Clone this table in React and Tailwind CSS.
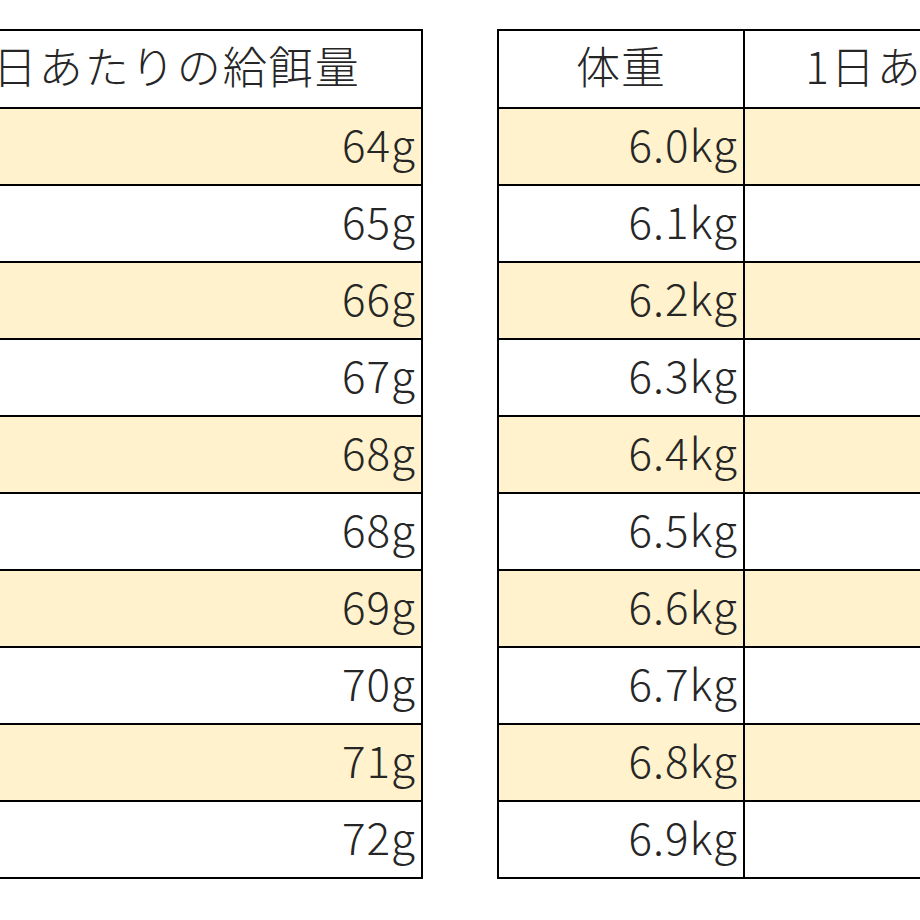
const leftRows = [
  ["5.0kg", "64g"],
  ["5.1kg", "65g"],
  ["5.2kg", "66g"],
  ["5.3kg", "67g"],
  ["5.4kg", "68g"],
  ["5.5kg", "68g"],
  ["5.6kg", "69g"],
  ["5.7kg", "70g"],
  ["5.8kg", "71g"],
  ["5.9kg", "72g"],
];

const rightRows = [
  ["6.0kg", "73g"],
  ["6.1kg", "74g"],
  ["6.2kg", "75g"],
  ["6.3kg", "76g"],
  ["6.4kg", "77g"],
  ["6.5kg", "78g"],
  ["6.6kg", "79g"],
  ["6.7kg", "80g"],
  ["6.8kg", "81g"],
  ["6.9kg", "82g"],
];

function FeedTable({ rows }) {
  return (
    <div className="shrink-0 grid grid-cols-[246px_516px] border-l-2 border-t-2 border-black">
      {/* Header */}
      <div className="h-[78px] flex items-center justify-center border-r-2 border-b-2 border-black bg-white pb-2 tracking-[1px]">
        体重
      </div>
      <div className="h-[78px] flex items-center justify-center border-r-2 border-b-2 border-black bg-white pb-2 tracking-[2px]">
        1日あたりの給餌量
      </div>

      {rows.map(([weight, feed], i) => {
        const bg = i % 2 === 0 ? "bg-[#fff2cc]" : "bg-white";
        return [
          <div
            key={"w" + i}
            className={`h-[77px] flex items-center justify-end pr-[5px] pb-2 tracking-[1px] border-r-2 border-b-2 border-black ${bg}`}
          >
            {weight}
          </div>,
          <div
            key={"f" + i}
            className={`h-[77px] flex items-center justify-end pr-[5px] pb-2 tracking-[1px] border-r-2 border-b-2 border-black ${bg}`}
          >
            {feed}
          </div>,
        ];
      })}
    </div>
  );
}

export default function App() {
  return (
    <div className="w-[920px] h-[920px] overflow-hidden bg-white text-[#262626] text-[44px] font-light leading-none font-['Noto_Sans_CJK_JP',sans-serif]">
      <div className="flex gap-[74px] ml-[-341px] mt-[29px]">
        <FeedTable rows={leftRows} />
        <FeedTable rows={rightRows} />
      </div>
    </div>
  );
}
